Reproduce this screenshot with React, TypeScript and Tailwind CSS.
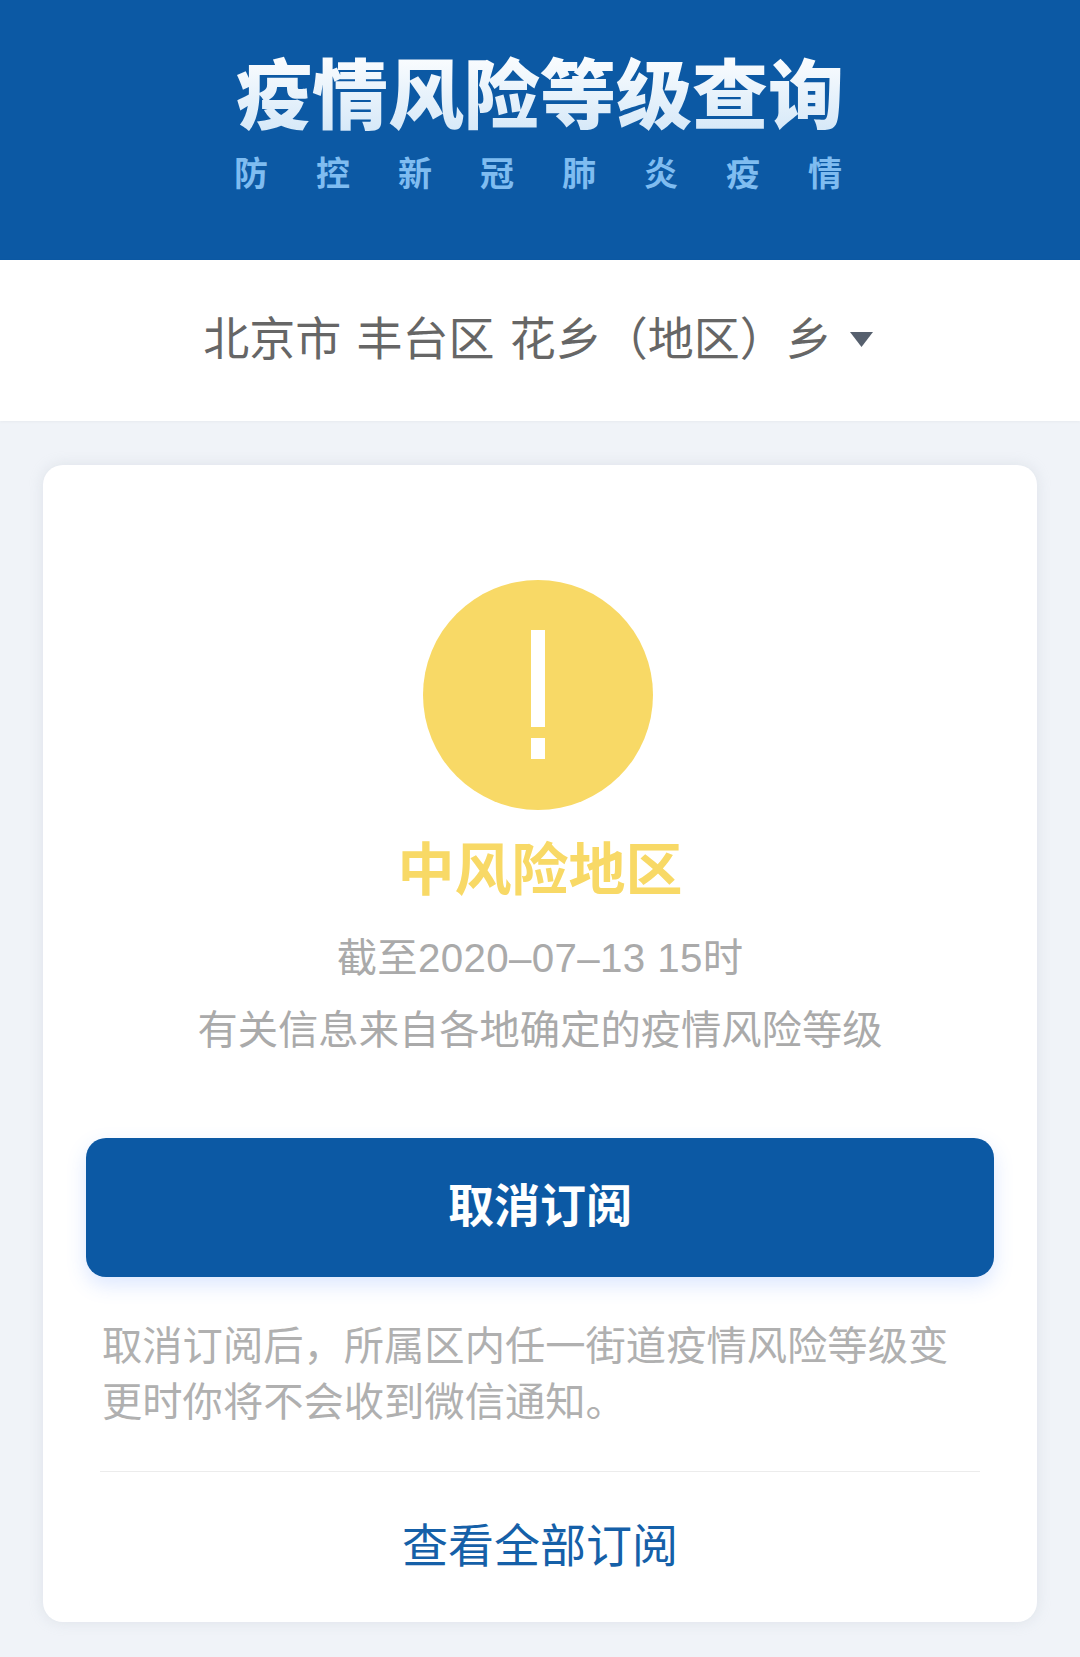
const cjk = "font-['Noto_Sans_CJK_SC','Liberation_Sans',sans-serif]";

export default function App() {
  return (
    <div className={`${cjk} min-h-[1657px] bg-[#f0f3f8]`}>
      {/* Header */}
      <div className="h-[260px] bg-[#0c59a4] flex flex-col items-center pt-[46px]">
        <div className="text-[76px] leading-[88px] font-black whitespace-nowrap bg-linear-to-b from-white to-[#d5e8f8] bg-clip-text text-transparent">
          疫情风险等级查询
        </div>
        <div className="w-[608px] mr-[4px] flex justify-between text-[34px] leading-[40px] font-bold text-[#7fbcf0] mt-[18px]">
          {"防控新冠肺炎疫情".split("").map((c, i) => (
            <span key={i}>{c}</span>
          ))}
        </div>
      </div>

      {/* Location picker */}
      <div className="h-[161px] bg-white flex items-center justify-center pr-[4px] text-[#666666] text-[46px] leading-none shadow-[0_1px_3px_rgba(0,0,0,0.04)]">
        <span className="whitespace-pre pb-[12px] [word-spacing:5px]">北京市 丰台区 花乡（地区）乡</span>
        <svg width="23" height="15" viewBox="0 0 23 15" className="ml-[18px] mb-[2px]">
          <path d="M0 0H23L11.5 15Z" fill="#56606e" />
        </svg>
      </div>

      {/* Card */}
      <div className="px-[43px] pt-[44px]">
        <div className="h-[1157px] bg-white rounded-[20px] shadow-[0_0_14px_rgba(180,190,200,0.3)] px-[43px] pt-[115px] flex flex-col">
          <div className="flex justify-center pr-[4px]">
            <div className="w-[230px] h-[230px] rounded-full bg-[#f8d966] flex flex-col items-center pt-[50px]">
              <div className="w-[14px] h-[97px] bg-white" />
              <div className="w-[14px] h-[21px] bg-white mt-[11px]" />
            </div>
          </div>
          <div className="mt-[20px] text-center text-[57px] leading-[70px] font-bold text-[#f8d966]">
            中风险地区
          </div>
          <div className="mt-[20px] text-center text-[40.3px] leading-[72px] text-[#aaaaaa]">
            <div className="pt-[3px] mb-[-4px] tracking-[0.35px] font-['Liberation_Sans','Noto_Sans_CJK_SC',sans-serif]">截至2020–07–13 15时</div>
            <div>有关信息来自各地确定的疫情风险等级</div>
          </div>

          <button className="mt-[75px] h-[139px] shrink-0 rounded-[20px] bg-[#0c59a4] text-white text-[46px] leading-none font-bold pb-[11px] shadow-[0_8px_20px_rgba(60,120,255,0.18)]">
            取消订阅
          </button>

          <p className="mt-[38px] px-[16px] text-[40.3px] leading-[56px] text-[#b0b0b0]">
            取消订阅后，所属区内任一街道疫情风险等级变更时你将不会收到微信通知。
          </p>

          <div className="mt-[44px] mx-[14px] border-t border-[#ececec]" />
          <div className="mt-[40px] text-center text-[46px] leading-[60px] text-[#1560a8]">
            查看全部订阅
          </div>
        </div>
      </div>
    </div>
  );
}
